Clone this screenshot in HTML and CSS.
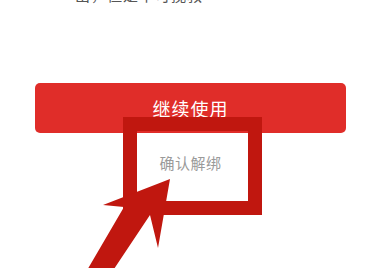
FILE: index.html
```html
<!DOCTYPE html>
<html lang="zh">
<head>
<meta charset="utf-8">
<link rel="stylesheet" href="styles.css">
</head>
<body>
<div class="page">
  <p class="note">出，但是不可挽救</p>
  <div class="actions">
    <button class="btn-primary">继续使用</button>
    <div class="btn-link">确认解绑</div>
  </div>
  <svg class="annot" width="386" height="268" viewBox="0 0 386 268">
    <rect x="130" y="124" width="125" height="84" fill="none" stroke="#c0170f" stroke-width="14"/>
    <polygon points="170,179 103,205 124,207 86,272 112,272 150,215 158,248" fill="#c0170f"/>
  </svg>
</div>
</body>
</html>
```

FILE: styles.css
```css
html, body {
  margin: 0;
  padding: 0;
  background: #ffffff;
}
.page {
  position: relative;
  width: 386px;
  height: 268px;
  overflow: hidden;
  font-family: "Noto Sans CJK SC", "Noto Sans", sans-serif;
}
.note {
  margin: -14px 0 0 75px;
  font-size: 15px;
  line-height: 17px;
  color: #555555;
  letter-spacing: 1px;
}
.actions {
  display: flex;
  flex-direction: column;
  align-items: center;
  margin-top: 80px;
  padding: 0 40px 0 35px;
}
.btn-primary {
  width: 311px;
  height: 50px;
  border: none;
  border-radius: 5px;
  background: #e02d29;
  color: #ffffff;
  font-family: inherit;
  font-size: 18px;
  letter-spacing: 1px;
  padding: 0;
}
.btn-link {
  margin-top: 19px;
  font-size: 15px;
  line-height: 22px;
  color: #9a9a9a;
  letter-spacing: 0.5px;
}
.annot {
  position: absolute;
  left: 0;
  top: 0;
}
```
